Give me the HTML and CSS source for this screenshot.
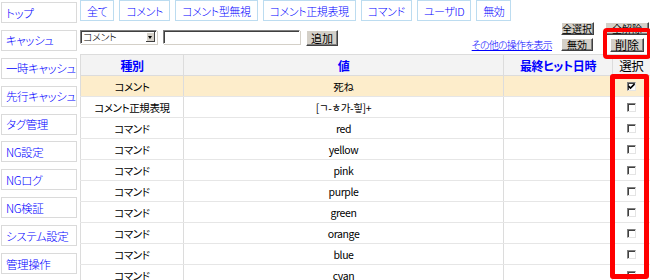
FILE: index.html
```html
<html>
  <head>
    <title>NG設定</title>
    <meta http-equiv="Content-Type" content="text/html;charset=UTF-8" />
    <link rel="stylesheet" href="styles.css">
  </head>
  <body>
    <div class="page">
      <!-- 左メニュー -->
      <nav class="side">
        <a class="side-item" href="#">トップ</a>
        <a class="side-item" href="#">キャッシュ</a>
        <a class="side-item" href="#">一時キャッシュ</a>
        <a class="side-item" href="#">先行キャッシュ</a>
        <a class="side-item" href="#">タグ管理</a>
        <a class="side-item" href="#">NG設定</a>
        <a class="side-item" href="#">NGログ</a>
        <a class="side-item" href="#">NG検証</a>
        <a class="side-item" href="#">システム設定</a>
        <a class="side-item" href="#">管理操作</a>
      </nav>

      <div class="main">
        <!-- 種別タブ -->
        <ul class="tabs">
          <li class="tab">全て</li>
          <li class="tab">コメント</li>
          <li class="tab">コメント型無視</li>
          <li class="tab">コメント正規表現</li>
          <li class="tab">コマンド</li>
          <li class="tab">ユーザID</li>
          <li class="tab">無効</li>
        </ul>

        <div class="toolbar">
          <div class="add-form">
            <div class="select">
              <span class="select-text">コメント</span>
              <span class="select-arrow"></span>
            </div>
            <div class="text-input"></div>
            <button class="btn btn-add">追加</button>
          </div>
          <div class="ops">
            <a class="ops-link" href="#">その他の操作を表示</a>
            <div class="ops-buttons">
              <button class="btn btn-all">全選択</button>
              <button class="btn btn-none">全解除</button>
              <button class="btn btn-off">無効</button>
              <button class="btn btn-del">削除</button>
            </div>
          </div>
        </div>

        <table class="ng-table">
          <colgroup>
            <col class="col-kind">
            <col class="col-value">
            <col class="col-hit">
            <col class="col-check">
          </colgroup>
          <thead>
            <tr>
              <th><a href="#">種別</a></th>
              <th><a href="#">値</a></th>
              <th><a href="#">最終ヒット日時</a></th>
              <th class="th-check">選択</th>
            </tr>
          </thead>
          <tbody id="ngBody">
            <tr class="row-hit">
              <td>コメント</td>
              <td>死ね</td>
              <td></td>
              <td><span class="check"><svg width="7" height="7" viewBox="0 0 7 7"><path d="M0.5 3 L2.5 5 L6.5 1" fill="none" stroke="#000" stroke-width="1.6"/></svg></span></td>
            </tr>
            <tr>
              <td>コメント正規表現</td>
              <td>[ㄱ-ㅎ가-힣]+</td>
              <td></td>
              <td><span class="check"></span></td>
            </tr>
          </tbody>
        </table>
      </div>

      <!-- 注目枠 -->
      <div class="mark mark-delete"></div>
      <div class="mark mark-select"></div>
    </div>

    <script>
      const ngBody = document.querySelector('#ngBody');
      const commands = ['red', 'yellow', 'pink', 'purple', 'green', 'orange', 'blue', 'cyan'];
      const frag = document.createDocumentFragment();

      for (let i = 0; i < commands.length; i++) {
        const tr = document.createElement('tr');
        tr.innerHTML =
          '<td>コマンド</td><td>' + commands[i] + '</td><td></td><td><span class="check"></span></td>';
        frag.appendChild(tr);
      }

      ngBody.appendChild(frag);
    </script>
  </body>
</html>
```

FILE: styles.css
```css
body {
  margin: 0;
  font-family: "Noto Sans CJK JP", sans-serif;
  font-size: 11px;
  font-weight: 300;
  font-feature-settings: "palt";
  letter-spacing: -0.4px;
  color: #000;
  background: #fff;
  overflow: hidden;
}

a {
  color: #0000ff;
  text-decoration: none;
}

.page {
  position: relative;
  display: flex;
  width: 650px;
  height: 280px;
  overflow: hidden;
}

/* 左メニュー */
.side {
  width: 76px;
  padding: 2px 0 0 1px;
  display: flex;
  flex-direction: column;
  gap: 6.9px;
  flex-shrink: 0;
}

.side-item {
  display: flex;
  align-items: center;
  height: 21px;
  box-sizing: border-box;
  padding-left: 4px;
  border: 1px solid #dadada;
  font-size: 11.5px;
  white-space: nowrap;
  overflow: hidden;
}

.main {
  margin-left: 3px;
  width: 569px;
}

/* タブ */
.tabs {
  display: flex;
  gap: 5px;
  margin: 0;
  padding: 0;
  list-style: none;
}

.tab {
  box-sizing: border-box;
  height: 21px;
  padding: 0 6px;
  border: 1px solid #bcdcf0;
  display: flex;
  align-items: center;
  font-size: 11px;
  color: #0000ff;
  white-space: nowrap;
}

/* 追加フォームと操作ボタン */
.toolbar {
  display: flex;
  justify-content: space-between;
  height: 33px;
}

.add-form {
  display: flex;
  align-items: flex-start;
  gap: 6px;
  margin-top: 9px;
}

.select {
  box-sizing: border-box;
  width: 77px;
  height: 14px;
  display: flex;
  align-items: center;
  border: 1px solid;
  border-color: #808080 #fff #fff #808080;
  box-shadow: inset 1px 1px 0 #404040, 1px 1px 0 #d4d0c8;
  padding-left: 2px;
}

.select-text {
  flex: 1;
  font-size: 10px;
  line-height: 12px;
}

.select-arrow {
  position: relative;
  width: 9px;
  height: 10px;
  margin-right: 1px;
  background: #d4d0c8;
  box-shadow: inset -1px -1px 0 #404040, inset 1px 1px 0 #fff;
}

.select-arrow::after {
  content: "";
  position: absolute;
  left: 2px;
  top: 4px;
  border-left: 2.5px solid transparent;
  border-right: 2.5px solid transparent;
  border-top: 3px solid #000;
}

.text-input {
  box-sizing: border-box;
  width: 137px;
  height: 14px;
  border: 1px solid;
  border-color: #808080 #fff #fff #808080;
  box-shadow: inset 1px 1px 0 #404040, 1px 1px 0 #d4d0c8;
}

.btn {
  box-sizing: border-box;
  height: 13px;
  padding: 0;
  font-family: "Noto Sans CJK JP", sans-serif;
  font-size: 10px;
  font-weight: 400;
  line-height: 10px;
  letter-spacing: 0;
  color: #000;
  background: #d4d0c8;
  border: 1px solid;
  border-color: #fff #404040 #404040 #fff;
  box-shadow: inset -1px -1px 0 #808080;
}

.btn-add {
  width: 32px;
  height: 16px;
  font-size: 11px;
}

.ops {
  display: flex;
  align-items: flex-end;
  gap: 8px;
}

.ops-link {
  text-decoration: underline;
  font-size: 10px;
  line-height: 11px;
  letter-spacing: -0.8px;
  margin-bottom: 4px;
}

.ops-buttons {
  display: grid;
  grid-template-columns: 34px 44px;
  column-gap: 11px;
  row-gap: 3px;
  justify-items: center;
  margin-top: 1px;
  align-self: flex-start;
}

.btn-all { width: 33px; }
.btn-none { width: 44px; }
.btn-off { width: 32px; }
.btn-del { width: 34px; height: 14px; font-size: 12px; line-height: 12px; }

/* NG一覧 */
.ng-table {
  border-collapse: collapse;
  table-layout: fixed;
  width: 569px;
  font-size: 10.5px;
}

.col-kind { width: 103px; }
.col-value { width: 320px; }
.col-hit { width: 109px; }
.col-check { width: 37px; }

.ng-table th,
.ng-table td {
  height: 21px;
  padding: 0;
  text-align: center;
  white-space: nowrap;
  border-left: 1px solid #dcdcdc;
  border-bottom: 1px solid #e6e6e6;
}

.ng-table th {
  background: #f3f3f3;
  border-top: 1px solid #dcdcdc;
  border-bottom-color: #dcdcdc;
  font-size: 12px;
  font-weight: bold;
}

.ng-table .th-check {
  font-weight: 400;
  font-size: 12.5px;
}

.row-hit td {
  background: #fdedcb;
}

.check {
  display: inline-flex;
  align-items: center;
  justify-content: center;
  vertical-align: middle;
  box-sizing: border-box;
  width: 9px;
  height: 9px;
  background: #fff;
  border: 1px solid;
  border-color: #808080 #e4e4e4 #e4e4e4 #808080;
  box-shadow: inset 1px 1px 0 #404040;
}

/* 赤い注目枠 */
.mark {
  position: absolute;
  box-sizing: border-box;
  border: 4px solid #ff0000;
  border-radius: 4px;
}

.mark-delete {
  left: 603px;
  top: 28px;
  width: 48px;
  height: 31px;
}

.mark-select {
  left: 610px;
  top: 74px;
  width: 39px;
  height: 205px;
  border-width: 5px;
  border-radius: 3px;
}
```
